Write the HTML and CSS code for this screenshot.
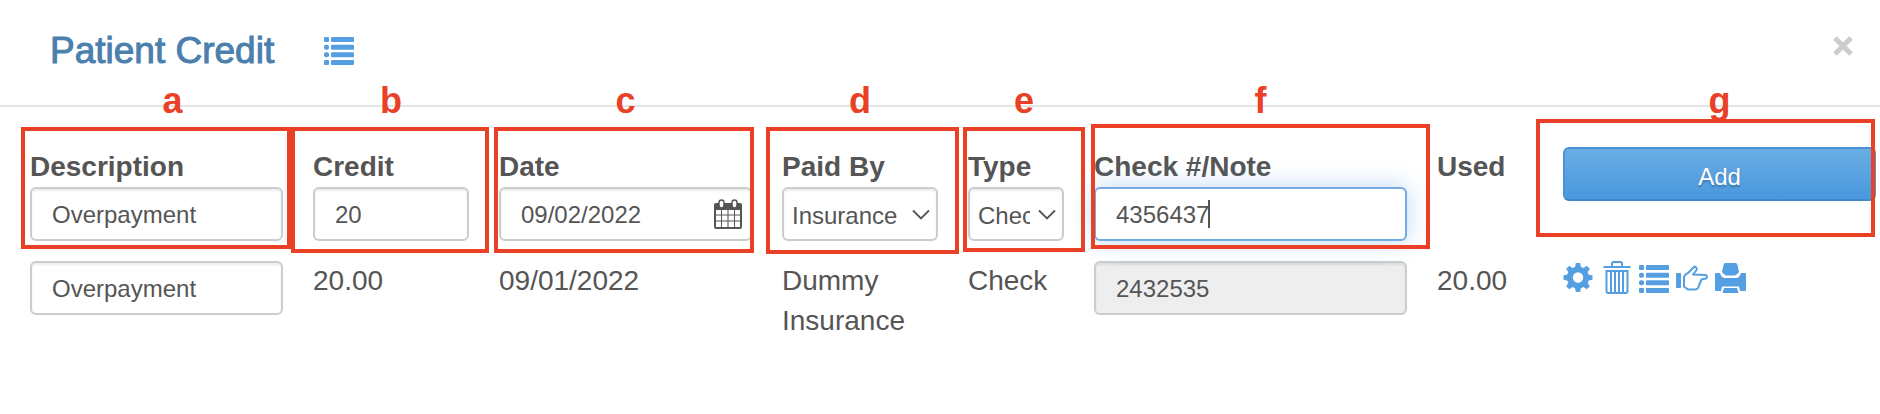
FILE: index.html
```html
<!DOCTYPE html>
<html lang="en">
<head>
    <meta charset="UTF-8">
    <meta name="viewport" content="width=device-width, initial-scale=1.0">
    <title>Patient Credit</title>
    <link rel="stylesheet" href="styles.css">
</head>
<body>

    <!-- shared icons -->
    <svg class="sprite" aria-hidden="true">
        <symbol id="icon-list" viewBox="0 0 30 28">
            <rect x="0" y="0" width="5" height="5" rx="1"/><rect x="7" y="0" width="23" height="5" rx="1"/>
            <rect x="0" y="7.700" width="5" height="5" rx="2"/><rect x="7" y="7.700" width="23" height="5" rx="1"/>
            <rect x="0" y="15.300" width="5" height="5" rx="2"/><rect x="7" y="15.300" width="23" height="5" rx="1"/>
            <rect x="0" y="23" width="5" height="5" rx="1"/><rect x="7" y="23" width="23" height="5" rx="1"/>
        </symbol>
        <symbol id="icon-chevron" viewBox="0 0 18 12">
            <path d="M1 1.500L9 9.500L17 1.500" fill="none" stroke="currentColor" stroke-width="1.800"/>
        </symbol>
    </svg>

    <header class="header">
        <h1 class="title">Patient Credit</h1>
        <button type="button" class="icon-btn" aria-label="List"><svg width="30" height="28"><use href="#icon-list"/></svg></button>
        <button type="button" class="icon-btn close" aria-label="Close">
            <svg width="20" height="20" viewBox="0 0 20 20"><path d="M2 2L18 18M18 2L2 18" stroke="currentColor" stroke-width="5"/></svg>
        </button>
    </header>

    <main class="content">
        <form class="grid">
            <div class="cell">
                <label for="description">Description</label>
                <input type="text" id="description" class="field" value="Overpayment">
                <div class="mark mark-a"></div>
                <span class="letter letter-a">a</span>
            </div>
            <div class="cell">
                <label for="credit">Credit</label>
                <input type="text" id="credit" class="field" value="20">
                <div class="mark mark-b"></div>
                <span class="letter">b</span>
            </div>
            <div class="cell">
                <label for="date">Date</label>
                <div class="control">
                    <input type="text" id="date" class="field" value="09/02/2022">
                    <svg class="calendar" width="28" height="30" viewBox="0 0 28 30">
                        <path d="M2 4H26Q28 4 28 6V28Q28 30 26 30H2Q0 30 0 28V6Q0 4 2 4Z" fill="currentColor"/>
                        <path d="M2 11H7V15.500H2ZM8 11H13.500V15.500H8ZM14.500 11H20V15.500H14.500ZM21 11H26V15.500H21ZM2 16.500H7V21.500H2ZM8 16.500H13.500V21.500H8ZM14.500 16.500H20V21.500H14.500ZM21 16.500H26V21.500H21ZM2 22.500H7V28H2ZM8 22.500H13.500V28H8ZM14.500 22.500H20V28H14.500ZM21 22.500H26V28H21Z" fill="#fff"/>
                        <rect x="5" y="1" width="5" height="8" rx="2.500" fill="#fff" stroke="currentColor" stroke-width="1.500"/>
                        <rect x="18" y="1" width="5" height="8" rx="2.500" fill="#fff" stroke="currentColor" stroke-width="1.500"/>
                    </svg>
                </div>
                <div class="mark mark-c"></div>
                <span class="letter">c</span>
            </div>
            <div class="cell">
                <label for="paid-by">Paid By</label>
                <div class="control">
                    <select id="paid-by" class="field"><option>Insurance</option></select>
                    <svg class="chevron" width="18" height="12"><use href="#icon-chevron"/></svg>
                </div>
                <div class="mark mark-d"></div>
                <span class="letter">d</span>
            </div>
            <div class="cell">
                <label for="type">Type</label>
                <div class="control">
                    <select id="type" class="field"><option>Check</option></select>
                    <svg class="chevron" width="18" height="12"><use href="#icon-chevron"/></svg>
                </div>
                <div class="mark mark-e"></div>
                <span class="letter letter-e">e</span>
            </div>
            <div class="cell">
                <label for="note">Check #/Note</label>
                <div class="control">
                    <input type="text" id="note" class="field active" value="4356437">
                    <span class="caret"></span>
                </div>
                <div class="mark mark-f"></div>
                <span class="letter letter-f">f</span>
            </div>
            <div class="cell">
                <strong>Used</strong>
            </div>
            <div class="cell">
                <button type="button" class="btn-add">Add</button>
                <div class="mark mark-g"></div>
                <span class="letter">g</span>
            </div>
        </form>

        <div class="grid">
            <div><input type="text" class="field" value="Overpayment" aria-label="Description"></div>
            <div>20.00</div>
            <div>09/01/2022</div>
            <div>Dummy Insurance</div>
            <div>Check</div>
            <div><input type="text" class="field" value="2432535" aria-label="Check #/Note" disabled></div>
            <div>20.00</div>
            <div class="actions">
                <button type="button" class="icon-btn" aria-label="Settings">
                    <svg width="30" height="34" viewBox="0 2 30 34"><path fill-rule="evenodd" d="M12.800 4H17.200L17.900 7.800L20.500 8.900L23.700 6.700L26.900 9.900L24.700 13.100L25.800 15.700L29.500 16.300V20.700L25.800 21.400L24.700 24L26.900 27.200L23.700 30.300L20.500 28.100L17.900 29.200L17.200 33H12.800L12.100 29.200L9.500 28.100L6.300 30.300L3.100 27.200L5.300 24L4.200 21.400L.500 20.700V16.300L4.200 15.700L5.300 13.100L3.100 9.900L6.300 6.700L9.500 8.900L12.100 7.800ZM15 13.300A5.200 5.200 0 1 0 15 23.700A5.200 5.200 0 1 0 15 13.300Z"/></svg>
                </button>
                <button type="button" class="icon-btn trash" aria-label="Delete">
                    <svg width="28" height="34" viewBox="0 1 28 34"><g fill="none" stroke="currentColor" stroke-width="2"><path d="M.500 7H27.500M9 6V3.500Q9 2 10.500 2H17.500Q19 2 19 3.500V6M3.500 11H24.500V31Q24.500 33 22.500 33H5.500Q3.500 33 3.500 31Z"/><path d="M8 12V32M12 12V32M16 12V32M20 12V32"/></g></svg>
                </button>
                <button type="button" class="icon-btn" aria-label="Details"><svg width="30" height="34" viewBox="0 1 30 34"><use href="#icon-list" y="5" width="30" height="28"/></svg></button>
                <button type="button" class="icon-btn" aria-label="Apply">
                    <svg width="34" height="34" viewBox="0 1 34 34"><rect x="1" y="13" width="5" height="15" rx="1"/><path d="M9 17Q10 14 13 13L19.500 6.500Q22.500 7.500 21.500 10L18 14.500L31 15Q33 17 31 18.500L26.500 19.500L23 28Q22 29.500 20 29.500H13L9 26.500Z" fill="none" stroke="currentColor" stroke-width="2" stroke-linejoin="round"/></svg>
                </button>
                <button type="button" class="icon-btn" aria-label="Print">
                    <svg width="31" height="34" viewBox="0 1 31 34"><path d="M10.500 3H20.500Q22 3 22.500 5L24 12Q22 15 20 15.500H11Q9 15 7 12L8.500 5Q9 3 10.500 3Z"/><path d="M1 13H5Q6 17 9 18H22Q25 17 26 13H30Q31 13 31 14V30Q31 31 30 31H25L24 26.500H7L6 31H1Q0 31 0 30V14Q0 13 1 13Z"/><path d="M9 28H22L23.500 33H7.500Z"/></svg>
                </button>
            </div>
        </div>
    </main>

</body>
</html>
```
FILE: styles.css
```css
* {
    box-sizing: border-box;
}

body {
    font-family: "Liberation Sans", Arial, sans-serif;
    font-size: 28px;
    line-height: 40px;
    color: #555;
    background: #fff;
    margin: 0;
}

.sprite {
    position: absolute;
    width: 0;
    height: 0;
}

.header {
    display: flex;
    align-items: center;
    gap: 50px;
    padding: 31px 27px 34px 50px;
    border-bottom: 2px solid #e5e5e5;
}

.title {
    margin: 0;
    font-size: 37px;
    line-height: 40px;
    font-weight: 400;
    color: #4a7fae;
    -webkit-text-stroke: 1px #4a7fae;
}

.icon-btn {
    display: block;
    padding: 0;
    border: none;
    background: none;
    color: #549fe1;
    cursor: pointer;
}

.icon-btn svg {
    display: block;
    fill: currentColor;
}

.close {
    margin-left: auto;
    margin-bottom: 10px;
    color: #ccc;
}

.content {
    display: flex;
    flex-direction: column;
    gap: 20px;
    padding: 40px 4px 40px 30px;
}

.grid {
    display: grid;
    grid-template-columns: 253fr 156fr 253fr 156fr 96fr 313fr 96fr 313fr;
    column-gap: 30px;
    align-items: start;
}

.grid > div {
    min-width: 0;
}

.cell {
    position: relative;
    align-self: stretch;
}

label,
strong {
    display: block;
    font-weight: 700;
    white-space: nowrap;
}

.control {
    position: relative;
}

.field {
    display: block;
    width: 100%;
    height: 54px;
    margin: 0;
    padding: 2px 20px 0;
    border: 2px solid #ccc;
    border-radius: 6px;
    background: #fff;
    box-shadow: inset 0 2px 2px rgba(0, 0, 0, 0.075);
    font-family: inherit;
    font-size: 24px;
    color: #555;
    outline: none;
}

.field:disabled {
    background: #eee;
}

.field.active {
    border-color: #73a9e4;
    box-shadow: 0 0 24px rgba(84, 159, 225, 0.4);
}

select.field {
    appearance: none;
    padding: 2px 32px 0 8px;
}

.chevron,
.calendar,
.caret {
    position: absolute;
    pointer-events: none;
}

.chevron {
    top: 22px;
    right: 8px;
}

.calendar {
    top: 12px;
    right: 10px;
}

.caret {
    top: 13px;
    left: 114px;
    width: 2px;
    height: 28px;
    background: #555;
}

.btn-add {
    display: block;
    width: 100%;
    height: 54px;
    padding: 6px 0 0;
    border: 2px solid #4a94d6;
    border-bottom-color: #4088c8;
    border-radius: 6px;
    background: linear-gradient(#6aade4, #4a98de);
    font-family: inherit;
    font-size: 24px;
    color: #fff;
    text-shadow: 0 2px 2px rgba(0, 0, 0, 0.25);
    cursor: pointer;
}

.actions {
    display: flex;
    gap: 6px;
}

.trash {
    margin: 0 2px 0 4px;
}

/* lettered callouts over the form */
.mark {
    position: absolute;
    border: 4px solid #ea4025;
    pointer-events: none;
}

.mark-a {
    inset: -20px -8px -8px -9px;
}

.mark-b {
    inset: -20px -20px -12px -22px;
}

.mark-c {
    inset: -20px -2px -12px -5px;
}

.mark-d {
    inset: -20px -21px -13px -16px;
}

.mark-e {
    inset: -20px -21px -11px -5px;
}

.mark-f {
    inset: -23px -23px -8px -3px;
}

.mark-g {
    inset: -28px 1px 4px -27px;
}

.letter {
    position: absolute;
    top: -66px;
    left: 0;
    right: 0;
    font-size: 36px;
    font-weight: 700;
    text-align: center;
    color: #ea4025;
    pointer-events: none;
}

.letter-a {
    padding-left: 32px;
}

.letter-e {
    padding-left: 16px;
}

.letter-f {
    padding-left: 20px;
}
```
